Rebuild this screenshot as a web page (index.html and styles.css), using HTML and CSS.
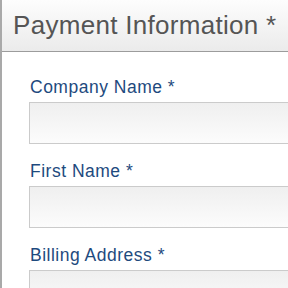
FILE: index.html
```html
<!DOCTYPE html>
<html lang="en">
<head>
    <meta charset="UTF-8">
    <meta name="viewport" content="width=device-width, initial-scale=1.0">
    <title>Payment Information</title>
    <link rel="stylesheet" href="styles.css">
</head>
<body>
<div class="panel">
    <h2 class="panel-header">Payment Information *</h2>
    <form class="payment-form">
        <div class="form-group">
            <label for="company">Company Name *</label>
            <input type="text" id="company">
        </div>
        <div class="form-group">
            <label for="first-name">First Name *</label>
            <input type="text" id="first-name">
        </div>
        <div class="form-group">
            <label for="address">Billing Address *</label>
            <input type="text" id="address">
        </div>
    </form>
</div>
</body>
</html>
```

FILE: styles.css
```css
body {
    font-family: "Liberation Sans", Arial, sans-serif;
    margin: 0;
    padding: 0;
    background: #fff;
    overflow: hidden;
}
.panel {
    width: 420px;
    border-left: 2px solid #a9a9a9;
    min-height: 288px;
}
.panel-header {
    margin: 0;
    height: 51px;
    line-height: 50px;
    padding-left: 11px;
    font-size: 26px;
    letter-spacing: 0.3px;
    font-weight: normal;
    color: #555;
    background: linear-gradient(#fdfdfd, #ebebeb);
    border-bottom: 1px solid #9c9c9c;
}
.payment-form {
    padding: 26px 0 0 27px;
}
.form-group {
    margin-bottom: 18px;
}
.form-group label {
    display: block;
    height: 18px;
    line-height: 18px;
    margin-bottom: 6px;
    font-size: 17.5px;
    letter-spacing: 0.5px;
    color: #1e4a7e;
    padding-left: 1px;
}
.form-group input {
    display: block;
    width: 100%;
    height: 42px;
    box-sizing: border-box;
    border: 1px solid #cbcbcb;
    background: linear-gradient(#efefef, #fcfcfc);
    margin: 0;
}
```
